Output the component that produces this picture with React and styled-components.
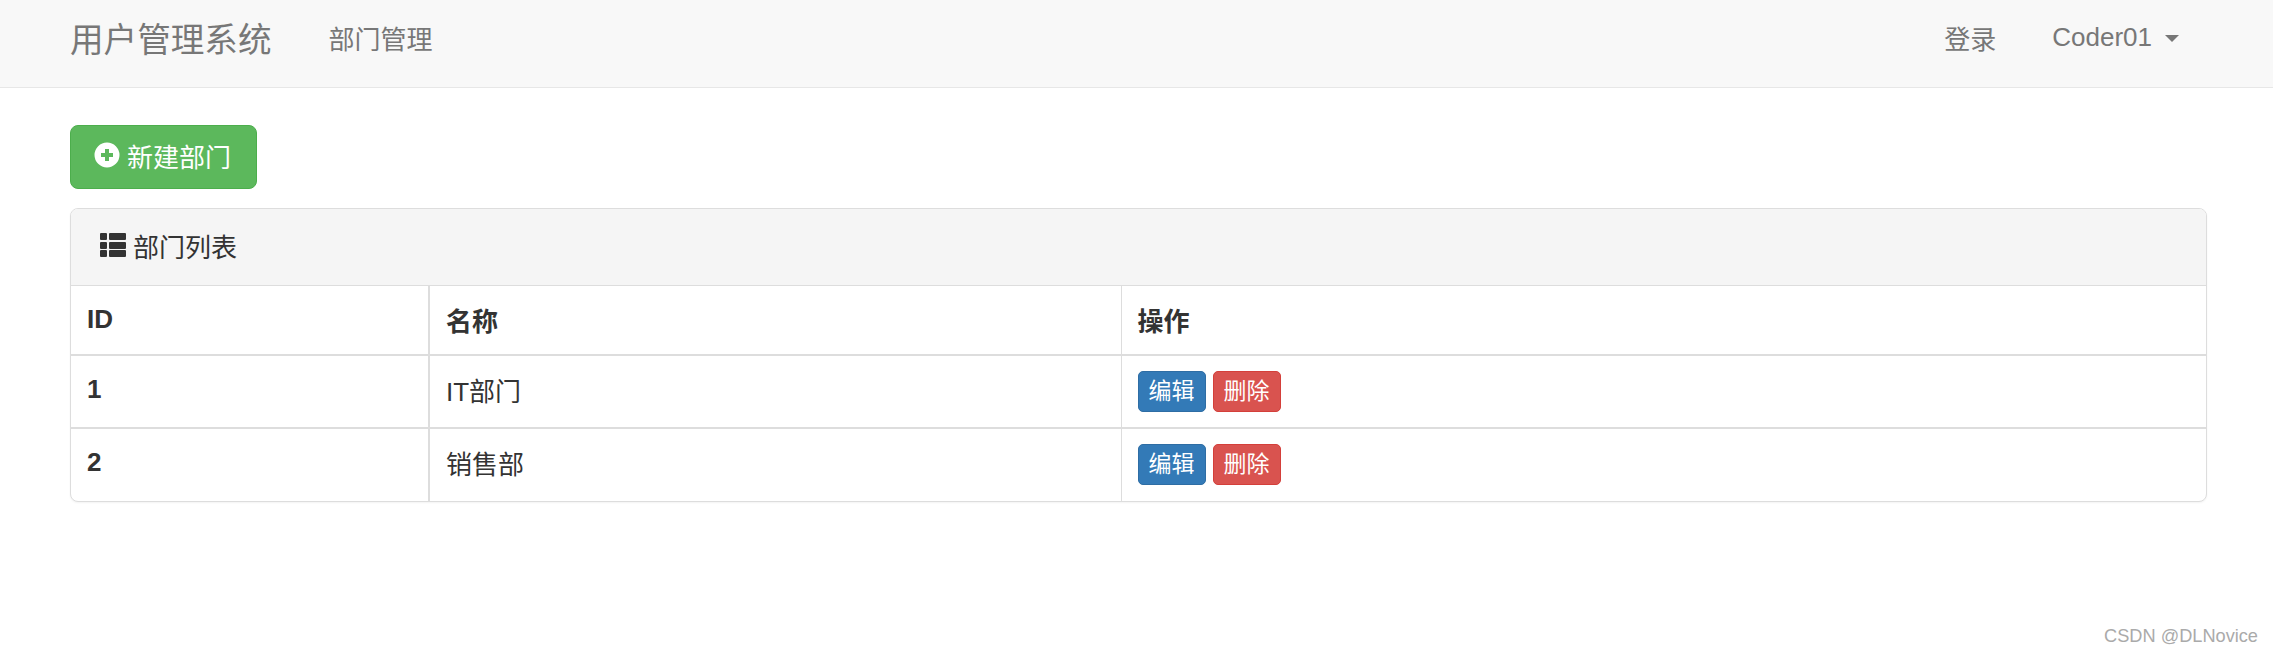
import React from "react";
import styled, { createGlobalStyle } from "styled-components";

const GlobalStyle = createGlobalStyle`
	html, body {
		margin: 0;
		padding: 0;
		background: #fff;
	}
	body {
		min-height: 655px;
		font-family: "Liberation Sans", "Noto Sans CJK SC", sans-serif;
		font-size: 26px;
		color: #333;
	}
	* {
		box-sizing: border-box;
	}
`;

const departments = [
	{ id: 1, name: "IT部门" },
	{ id: 2, name: "销售部" },
];

const PlusIcon = () => (
	<svg width="26" height="26" viewBox="0 0 26 26" aria-hidden="true">
		<path
			fill="currentColor"
			fillRule="evenodd"
			d="M13 .5a12.5 12.5 0 1 0 0 25 12.5 12.5 0 0 0 0-25zM11 7h4v4h4v4h-4v4h-4v-4H7v-4h4z"
		/>
	</svg>
);

const ListIcon = () => (
	<svg width="26" height="24" viewBox="0 0 26 24" aria-hidden="true">
		<path
			fill="currentColor"
			d="M0 1a1 1 0 0 1 1-1h5a1 1 0 0 1 1 1v5a1 1 0 0 1-1 1H1a1 1 0 0 1-1-1zM9 1a1 1 0 0 1 1-1h15a1 1 0 0 1 1 1v5a1 1 0 0 1-1 1H10a1 1 0 0 1-1-1zM0 10a1 1 0 0 1 1-1h5a1 1 0 0 1 1 1v5a1 1 0 0 1-1 1H1a1 1 0 0 1-1-1zM9 10a1 1 0 0 1 1-1h15a1 1 0 0 1 1 1v5a1 1 0 0 1-1 1H10a1 1 0 0 1-1-1zM0 18a1 1 0 0 1 1-1h5a1 1 0 0 1 1 1v5a1 1 0 0 1-1 1H1a1 1 0 0 1-1-1zM9 18a1 1 0 0 1 1-1h15a1 1 0 0 1 1 1v5a1 1 0 0 1-1 1H10a1 1 0 0 1-1-1z"
		/>
	</svg>
);

const App = () => {
	return (
		<>
			<GlobalStyle />
			<Navbar>
				<NavLeft>
					<Brand>用户管理系统</Brand>
					<NavLink>部门管理</NavLink>
				</NavLeft>
				<NavRight>
					<NavLink>登录</NavLink>
					<NavLink>
						Coder01
						<Caret />
					</NavLink>
				</NavRight>
			</Navbar>

			<Content>
				<AddButton type="button">
					<PlusIcon />
					新建部门
				</AddButton>

				<Panel>
					<PanelHeading>
						<ListIcon />
						部门列表
					</PanelHeading>
					<Table>
						<colgroup>
							<col width="358" />
							<col width="692" />
							<col />
						</colgroup>
						<thead>
							<tr>
								<Th>ID</Th>
								<Th>名称</Th>
								<Th>操作</Th>
							</tr>
						</thead>
						<tbody>
							{departments.map((dept) => (
								<tr key={dept.id}>
									<Th as="td">{dept.id}</Th>
									<Td>{dept.name}</Td>
									<ActionCell>
										<Actions>
											<SmallButton type="button" $bg="#337ab7" $border="#2e6da4">
												编辑
											</SmallButton>
											<SmallButton type="button" $bg="#d9534f" $border="#d43f3a">
												删除
											</SmallButton>
										</Actions>
									</ActionCell>
								</tr>
							))}
						</tbody>
					</Table>
				</Panel>
			</Content>

			<Watermark>CSDN @DLNovice</Watermark>
		</>
	);
};

const Navbar = styled.nav`
	display: flex;
	align-items: center;
	justify-content: space-between;
	height: 88px;
	padding: 0 94px 13px 70px;
	background: #f8f8f8;
	border-bottom: 1px solid #e7e7e7;
`;

const NavLeft = styled.div`
	display: flex;
	align-items: center;
	gap: 57px;
`;

const NavRight = styled.div`
	display: flex;
	align-items: center;
	gap: 56px;
`;

const Brand = styled.a`
	font-size: 33.6px;
	color: #777;
`;

const NavLink = styled.a`
	display: flex;
	align-items: center;
	font-size: 26px;
	color: #777;
`;

const Caret = styled.span`
	width: 0;
	height: 0;
	margin-left: 13px;
	margin-top: 2px;
	border-top: 7px solid #777;
	border-left: 7.5px solid transparent;
	border-right: 7.5px solid transparent;
`;

const Content = styled.main`
	padding: 37px 66px 0 70px;
`;

const AddButton = styled.button`
	display: flex;
	align-items: center;
	gap: 7px;
	height: 64px;
	padding: 0 25px 4px 23px;
	font: inherit;
	color: #fff;
	background: #5cb85c;
	border: 1px solid #4cae4c;
	border-radius: 8px;
`;

const Panel = styled.section`
	margin-top: 19px;
	background: #fff;
	border: 1px solid #ddd;
	border-radius: 8px;
	box-shadow: 0 1px 2px rgba(0, 0, 0, 0.05);
	overflow: hidden;
`;

const PanelHeading = styled.div`
	display: flex;
	align-items: center;
	gap: 7px;
	height: 77px;
	padding: 0 29px 4px;
	background: #f5f5f5;
	border-bottom: 1px solid #ddd;
`;

const Table = styled.table`
	width: 100%;
	table-layout: fixed;
	border-collapse: collapse;

	thead th {
		height: 69px;
		padding-bottom: 2px;
		border-bottom-width: 2px;
	}

	tbody tr {
		height: 73px;
	}

	tbody td {
		padding-bottom: 5px;
	}

	tbody tr:last-child td {
		border-bottom: 0;
	}

	tr > :first-child {
		border-left: 0;
		border-right-width: 2px;
	}

	tr > :last-child {
		border-right: 0;
	}
`;

const Th = styled.th`
	padding: 0 16px;
	font-weight: 700;
	text-align: left;
	border: 1px solid #ddd;
	border-bottom-width: 2px;
	border-top: 0;
`;

const Td = styled.td`
	padding: 0 16px;
	border: 1px solid #ddd;
	border-bottom-width: 2px;
	border-top: 0;
`;

const ActionCell = styled(Td)`
	&& {
		padding-bottom: 0;
	}

	tr:last-child > && {
		padding-bottom: 2px;
	}
`;

const Actions = styled.div`
	display: flex;
	gap: 7px;
`;

const SmallButton = styled.button`
	width: 68px;
	height: 41px;
	padding: 0;
	font: inherit;
	font-size: 23px;
	line-height: 1;
	color: #fff;
	background: ${(props) => props.$bg};
	border: 1px solid ${(props) => props.$border};
	border-radius: 5px;
`;

const Watermark = styled.div`
	position: absolute;
	right: 15px;
	top: 626px;
	font-size: 18.2px;
	color: #aaa;
`;

export default App;
